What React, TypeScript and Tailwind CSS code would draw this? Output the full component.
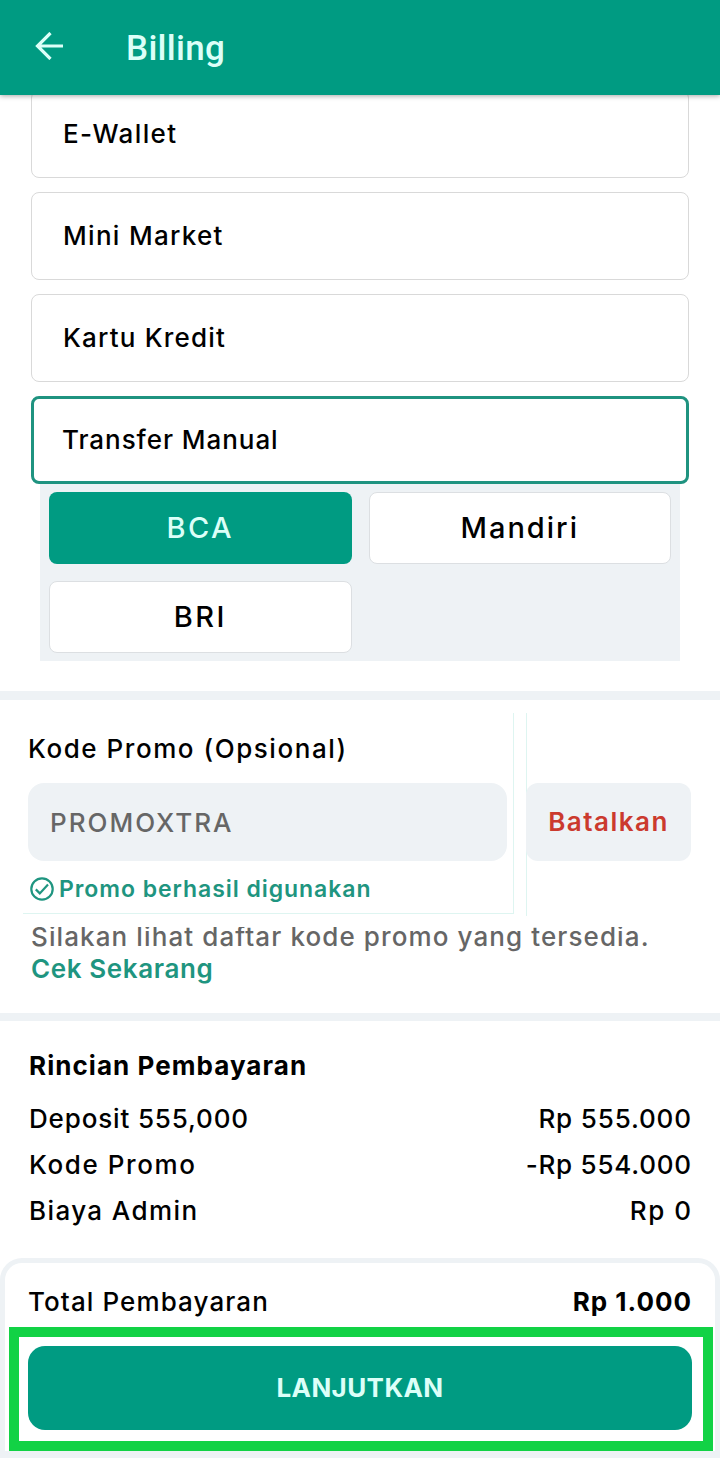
import React from "react";

const methods = [
  { name: "Mini Market", spacing: "tracking-[1.3px]" },
  { name: "Kartu Kredit", spacing: "tracking-[1.2px]" },
];

const details = [
  {
    label: "Deposit 555,000",
    value: "Rp 555.000",
    labelStyle: "tracking-[0.85px]",
    valueStyle: "tracking-[0.85px] -mr-[0.85px]",
  },
  {
    label: "Kode Promo",
    value: "-Rp 554.000",
    labelStyle: "tracking-[1.6px]",
    valueStyle: "tracking-[0.75px] -mr-[0.75px]",
  },
  {
    label: "Biaya Admin",
    value: "Rp 0",
    labelStyle: "tracking-[1.4px]",
    valueStyle: "tracking-[1.5px] -mr-[1.5px]",
  },
];

function Header() {
  return (
    <header className="relative z-10 flex h-[95px] items-center bg-[#009b82] pl-[35px] shadow-[0_1px_5px_rgba(0,0,0,0.35)]">
      <svg
        className="-mt-[3px] h-7 w-7"
        viewBox="0 0 28 28"
        fill="none"
        stroke="#dcfff8"
        strokeWidth="3.2"
      >
        <path d="M28 14H2.5M15.5 1L2.5 14l13 13" />
      </svg>
      <h1 className="mt-px ml-[63px] font-[Roboto] text-[35px] leading-none font-medium tracking-[0.3px] text-[#dcfff8]">
        Billing
      </h1>
    </header>
  );
}

function PaymentMethods() {
  return (
    <section className="px-[31px]">
      {/* first card is partly scrolled under the header */}
      <div className="-mt-[5px] flex h-[88px] items-center rounded-lg border border-[#d9d9d9] pb-px pl-[31px] tracking-[1.4px]">
        E-Wallet
      </div>
      {methods.map((method) => (
        <div
          key={method.name}
          className="mt-[14px] flex h-[88px] items-center rounded-lg border border-[#d9d9d9] pb-px pl-[31px]"
        >
          <span className={method.spacing}>{method.name}</span>
        </div>
      ))}
      <div className="mt-[14px] flex h-[88px] items-center rounded-lg border-3 border-[#1f9380] pb-px pl-7 tracking-[0.95px]">
        Transfer Manual
      </div>

      {/* banks */}
      <div className="mx-[9px] grid h-[177px] grid-cols-2 gap-x-[17px] gap-y-[17px] bg-[#eef2f5] px-[9px] py-2 text-[29px]">
        <button className="h-[72px] rounded-lg bg-[#009b82] tracking-[2.4px] text-[#dcfff8]">
          BCA
        </button>
        <button className="h-[72px] rounded-lg border border-[#dcdfe2] bg-white tracking-[2px]">
          Mandiri
        </button>
        <button className="h-[72px] rounded-lg border border-[#dcdfe2] bg-white tracking-[2.4px]">
          BRI
        </button>
      </div>
    </section>
  );
}

function Promo() {
  return (
    <section className="h-[313px]">
      {/* the white block covers the very top of the hint line below it */}
      <div className="relative z-10 flex h-[227px] bg-white pt-[13px]">
        <div className="ml-[23px] h-[201px] w-[491px] border-r border-b border-[#def5f1] pt-5 pl-[5px]">
          <h2 className="leading-8 tracking-[1.55px]">Kode Promo (Opsional)</h2>
          <div className="mt-[18px] flex h-[78px] w-[479px] items-center rounded-2xl bg-[#eef2f5] pl-[22px] tracking-[2px] text-[#666]">
            PROMOXTRA
          </div>
          <p className="mt-3 flex items-center pl-[2px] text-[23px] leading-8 tracking-[0.95px] text-[#1f9580]">
            <svg
              className="mr-[5px] h-6 w-6"
              viewBox="0 0 24 24"
              fill="none"
              stroke="currentColor"
              strokeWidth="2.2"
            >
              <circle cx="12" cy="12" r="10.7" />
              <path d="M5.8 12.4l4 4L18 7.6" />
            </svg>
            <span className="font-semibold">Promo berhasil digunakan</span>
          </p>
        </div>
        <div className="ml-3 h-[203px] w-[165px] border-l border-[#def5f1] pt-[70px]">
          <button className="-ml-px h-[78px] w-[165px] rounded-xl bg-[#eef2f5] pb-px font-semibold tracking-[1.5px] text-[#cb3a2e]">
            Batalkan
          </button>
        </div>
      </div>
      <p className="-mt-[6px] pl-[31px] leading-8 tracking-[1.1px] text-[#666]">
        Silakan lihat daftar kode promo yang tersedia.
      </p>
      <a
        href="#"
        className="block pl-[31px] leading-8 font-semibold tracking-[0.6px] text-[#1f9580]"
      >
        Cek Sekarang
      </a>
    </section>
  );
}

function Details() {
  return (
    <section className="h-[237px] px-[29px] pt-[29px]">
      <h2 className="leading-8 font-bold tracking-[1.05px]">
        Rincian Pembayaran
      </h2>
      <div className="mt-[17px]">
        {details.map((row) => (
          <div key={row.label} className="flex h-[46px] justify-between">
            <span className={row.labelStyle}>{row.label}</span>
            <span className={row.valueStyle}>{row.value}</span>
          </div>
        ))}
      </div>
    </section>
  );
}

function Checkout() {
  return (
    <footer className="h-[200px] rounded-t-[22px] border-[5px] border-b-[7px] border-[#eef2f5] bg-white">
      <div className="flex h-16 items-center justify-between px-6 pt-[13px]">
        <span className="-ml-px tracking-[1.1px]">Total Pembayaran</span>
        <span className="-mr-px font-bold tracking-[1px]">Rp 1.000</span>
      </div>
      <div className="ml-1 h-[124px] w-[704px] border-[10px] border-[#12d245] px-[9px] py-[9px]">
        <button className="h-[84px] w-[664px] rounded-[17px] bg-[#009b82] pb-px font-bold tracking-[0.4px] text-[#dcfff8]">
          LANJUTKAN
        </button>
      </div>
    </footer>
  );
}

function App() {
  return (
    <div className="h-[1458px] w-[720px] overflow-hidden bg-white font-[Inter] text-[26px] font-medium text-black">
      <Header />
      <PaymentMethods />
      <div className="mt-[30px] h-[9px] bg-[#eef2f5]" />
      <Promo />
      <div className="h-2 bg-[#eef2f5]" />
      <Details />
      <Checkout />
    </div>
  );
}

export default App;
